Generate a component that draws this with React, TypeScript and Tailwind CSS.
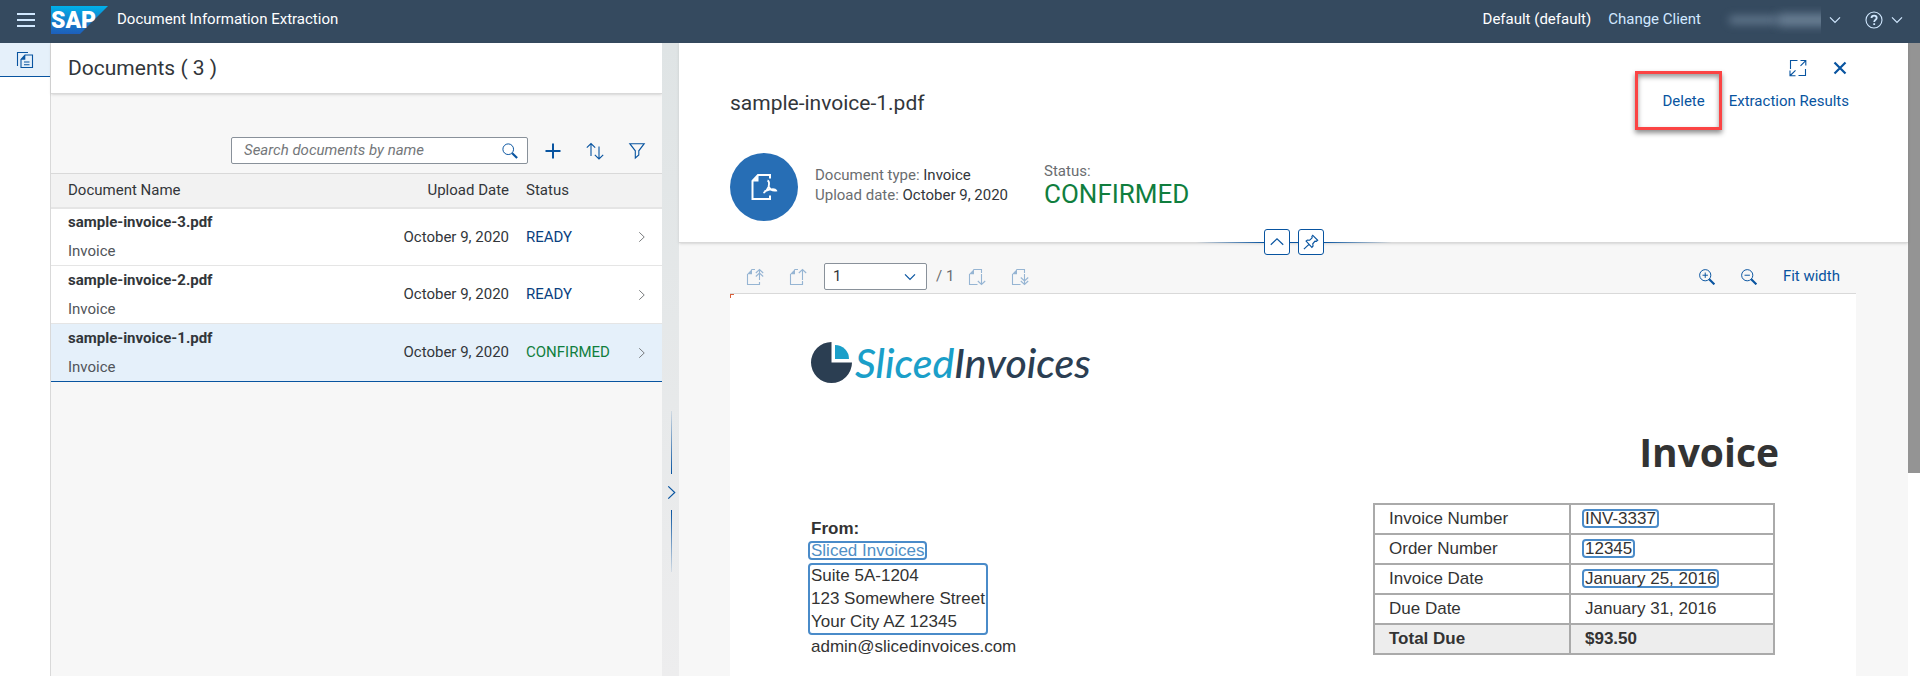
import React from 'react';

type IconProps = { className?: string; children: React.ReactNode; size?: number; stroke?: number };

function Icon({ className = '', children, size = 18, stroke = 1.1 }: IconProps) {
  return (
    <svg
      width={size}
      height={size}
      viewBox="0 0 18 18"
      fill="none"
      stroke="currentColor"
      strokeWidth={stroke}
      className={`shrink-0 ${className}`}
      aria-hidden="true"
    >
      {children}
    </svg>
  );
}

const ChevronDown = ({ className = '' }: { className?: string }) => (
  <Icon size={12} className={className} stroke={1.8}>
    <path d="M1.5 5 L9 12.5 L16.5 5" />
  </Icon>
);

const PageOutline = () => (
  <>
    <path d="M5.5 1.5 H9 M1.5 6 V16.5 H13.5 V14" />
    <path d="M1 6.2 L6 1 V6.2 Z" fill="currentColor" stroke="none" />
  </>
);

function SapLogo() {
  return (
    <svg width="57" height="28" viewBox="0 0 57 28" role="img" aria-label="SAP" className="shrink-0">
      <defs>
        <linearGradient id="sap" x1="0" y1="0" x2="0" y2="1">
          <stop offset="0" stopColor="#00b1eb" />
          <stop offset="0.5" stopColor="#1481cd" />
          <stop offset="1" stopColor="#1e5fbb" />
        </linearGradient>
      </defs>
      <path d="M0 0 H57 L29 28 H0 Z" fill="url(#sap)" />
      <text x="0" y="22" fontSize="23" fontWeight="900" fontFamily="Roboto, sans-serif" fill="#fff">
        SAP
      </text>
    </svg>
  );
}

function Header() {
  return (
    <header className="flex h-[43px] shrink-0 items-center bg-[#354a5f] pr-[17px] pb-1 text-[15px] text-white">
      <button aria-label="Toggle navigation" className="flex w-[51px] items-center justify-center text-[#d1e8ff]">
        <Icon stroke={1.8}>
          <path d="M0 3 H18 M0 9 H18 M0 15 H18" />
        </Icon>
      </button>
      <SapLogo />
      <h1 className="ml-[9px]">Document Information Extraction</h1>
      <div className="ml-auto flex items-center">
        <span>Default (default)</span>
        <a href="#client" className="ml-[17px] text-[#d1e8ff]">
          Change Client
        </a>
        <button aria-label="User menu" className="ml-4 flex items-center text-[#d1e8ff]">
          <span className="flex h-7 w-[104px] items-center overflow-hidden pl-3">
            <span className="h-2 w-12 shrink-0 rounded bg-[#8fa5bb]/50 blur-[4px]" />
            <span className="h-3 w-16 shrink-0 rounded bg-[#8fa5bb]/60 blur-[5px]" />
          </span>
          <ChevronDown className="ml-2" />
        </button>
        <button aria-label="Help" className="ml-6 flex items-center gap-2 text-[#d1e8ff]">
          <Icon>
            <circle cx="9" cy="9" r="8" />
            <path d="M6.5 7 C6.5 3.8 11.7 3.8 11.7 7 C11.7 8.8 9.2 8.8 9.2 11 M9.2 12.2 V14" strokeWidth="1.8" />
          </Icon>
          <ChevronDown />
        </button>
      </div>
    </header>
  );
}

const documents = [
  { name: 'sample-invoice-3.pdf', type: 'Invoice', date: 'October 9, 2020', status: 'READY' },
  { name: 'sample-invoice-2.pdf', type: 'Invoice', date: 'October 9, 2020', status: 'READY' },
  { name: 'sample-invoice-1.pdf', type: 'Invoice', date: 'October 9, 2020', status: 'CONFIRMED' },
];

function DocumentList() {
  return (
    <section className="min-w-0 bg-[#f7f7f7]">
      <div className="flex h-[51px] items-center border-b border-[#d9d9d9] bg-white px-[17px] pt-0.5 shadow-sm">
        <h2 className="text-[21px]">Documents ( 3 )</h2>
      </div>
      <div className="flex h-[79px] items-end justify-end px-4 pb-[9px] text-[#0854a0]">
        <label className="flex h-[27px] w-[297px] items-center rounded-[2px] border border-[#89919a] bg-white pr-[9px] pl-3">
          <input
            type="text"
            aria-label="Search documents by name"
            placeholder="Search documents by name"
            className="min-w-0 flex-1 bg-transparent text-[15px] text-[#32363a] outline-none placeholder:text-[#74777a] placeholder:italic"
          />
          <button aria-label="Search">
            <Icon size={16}>
              <circle cx="7" cy="7" r="6" />
              <path d="M11.5 11.5 L17 17" strokeWidth="2.4" />
            </Icon>
          </button>
        </label>
        <div className="flex h-[27px] items-center gap-6 pl-4">
          <button aria-label="Add">
            <Icon stroke={2}>
              <path d="M9 1.5 V16.5 M1.5 9 H16.5" />
            </Icon>
          </button>
          <button aria-label="Sort">
            <Icon>
              <path d="M5 14 V1.5 M.8 5.7 L5 1.5 L9.2 5.7 M13 4.5 V17 M8.8 12.8 L13 17 L17.2 12.8" />
            </Icon>
          </button>
          <button aria-label="Filter">
            <Icon>
              <path d="M1.8 1.7 H16.2 L10.8 8.8 V13 L7.3 16 V8.8 Z" />
            </Icon>
          </button>
        </div>
      </div>
      <table className="w-full table-fixed border-collapse text-[15px]">
        <colgroup>
          <col />
          <col className="w-[200px]" />
          <col className="w-[103px]" />
          <col className="w-[41px]" />
        </colgroup>
        <thead>
          <tr className="h-[34px] border-t border-b-2 border-t-[#d9d9d9] border-b-[#e5e5e5] bg-[#f2f2f2] text-left">
            <th className="pl-[17px] font-normal">Document Name</th>
            <th className="pr-[9px] text-right font-normal">Upload Date</th>
            <th className="pl-2 font-normal">Status</th>
            <td />
          </tr>
        </thead>
        <tbody>
          {documents.map((d) => {
            const confirmed = d.status === 'CONFIRMED';
            return (
              <tr
                key={d.name}
                className={`h-[58px] border-b ${
                  confirmed ? 'border-[#0854a0] bg-[#e5f0fa]' : 'border-[#e5e5e5] bg-white'
                }`}
              >
                <td className="pl-[17px]">
                  <div className="leading-[20px] font-bold">{d.name}</div>
                  <div className="mt-[9px] leading-[20px] text-[#51555a]">{d.type}</div>
                </td>
                <td className="pr-[9px] text-right">{d.date}</td>
                <td className={`pl-2 ${confirmed ? 'text-[#107e3e]' : 'text-[#0a3f7f]'}`}>{d.status}</td>
                <td>
                  <Icon size={10} className="mx-auto text-[#6a6d70]" stroke={1.6}>
                    <path d="M4 0.5 L13 9 L4 17.5" />
                  </Icon>
                </td>
              </tr>
            );
          })}
        </tbody>
      </table>
    </section>
  );
}

function Splitter() {
  return (
    <div className="flex flex-col items-center bg-gradient-to-b from-[#dfe4e5] to-[#ededee] pt-[368px] pl-0.5">
      <div className="h-[63px] w-px bg-gradient-to-b from-[#0854a0]/10 to-[#0854a0]" />
      <button aria-label="Expand list" className="flex h-[36px] items-center text-[#0854a0]">
        <Icon size={13} stroke={1.6}>
          <path d="M4.5 0.5 L13.5 9 L4.5 17.5" />
        </Icon>
      </button>
      <div className="h-[62px] w-px bg-gradient-to-b from-[#0854a0] to-[#0854a0]/10" />
    </div>
  );
}

function DetailHeader() {
  return (
    <div className="relative h-[200px] shrink-0 border-b border-[#d9d9d9] bg-white pt-4 pr-[59px] pl-[51px] shadow-sm">
      <div className="flex justify-end gap-6 text-[#0854a0]">
        <button aria-label="Full screen">
          <Icon>
            <path d="M1.5 10 V1.5 H8.5 M9.5 16.5 H16.5 V10 M11.5 1.5 H16.8 V6.5 M16.5 1.8 L11.5 6.8 M1 11.5 V16.8 H6.5 M1.3 16.5 L6.5 11.3" />
          </Icon>
        </button>
        <button aria-label="Close">
          <Icon stroke={2.2}>
            <path d="M3.5 3.5 L14.5 14.5 M14.5 3.5 L3.5 14.5" />
          </Icon>
        </button>
      </div>
      <div className="mt-3 flex h-7 items-start">
        <h2 className="text-[21px] leading-7">sample-invoice-1.pdf</h2>
        <div className="relative ml-auto flex items-center gap-6 text-[15px] leading-6 text-[#0854a0]">
          <button>Delete</button>
          <button>Extraction Results</button>
          <div className="pointer-events-none absolute -top-[18px] -left-[27px] h-[59px] w-[87px] border-3 border-[#fb4444] shadow-[0_3px_5px_rgba(0,0,0,0.45),inset_0_3px_5px_rgba(0,0,0,0.4)]" />
        </div>
      </div>
      <div className="mt-9 flex h-[68px] text-[15px]">
        <div className="flex size-[68px] items-center justify-center rounded-full bg-[#276eb5] text-white">
          <svg width="28" height="28" viewBox="0 0 28 28" fill="none" stroke="currentColor" strokeWidth="2" aria-hidden="true">
            <path d="M20 5.5 V2 H8 L2.5 8 V26 H20 V22.5" />
            <path d="M3 8.5 L8.5 2.5 V8.5 Z" fill="currentColor" stroke="none" />
            <path d="M17.5 7.5 C20 8.5 19 12 18.5 14 C17.5 16.5 16 18.5 13.5 20 M18.5 13.5 C20 16.5 22.5 18 26 17.5 C25 15.5 20.5 16 14.5 18.3" strokeWidth="1.9" />
          </svg>
        </div>
        <div className="ml-[17px] pt-[12px] leading-[20px] text-[#6a6d70]">
          <p>
            Document type: <span className="text-[#32363a]">Invoice</span>
          </p>
          <p>
            Upload date: <span className="text-[#32363a]">October 9, 2020</span>
          </p>
        </div>
        <div className="ml-9 pt-2 text-[#6a6d70]">
          <p className="leading-[20px]">Status:</p>
          <p className="text-[26px] leading-[26px] text-[#107e3e]">CONFIRMED</p>
        </div>
      </div>
      <div className="absolute inset-x-0 -bottom-[13px] flex items-center justify-center">
        <span className="h-px w-[68px] bg-gradient-to-r from-transparent to-[#0854a0]" />
        <button aria-label="Collapse header" className="flex size-[26px] items-center justify-center rounded-[3px] border border-[#0854a0] bg-white text-[#0854a0]">
          <Icon size={14} stroke={1.5}>
            <path d="M1 12.5 L9 5 L17 12.5" />
          </Icon>
        </button>
        <span className="h-px w-2 bg-[#0854a0]" />
        <button aria-label="Pin header" className="flex size-[26px] items-center justify-center rounded-[3px] border border-[#0854a0] bg-white text-[#0854a0]">
          <Icon size={16} stroke={1.3}>
            <path d="M11 1.5 L16.5 7 L15 8.2 L13.5 8 L11 11 L11.3 13.5 L10 15 L3.5 8 L5 6.8 L7.5 7 L10.3 4.3 L10 2.7 Z M7 11.3 L1 17" />
          </Icon>
        </button>
        <span className="h-px w-[68px] bg-gradient-to-l from-transparent to-[#0854a0]" />
      </div>
    </div>
  );
}

function ViewerToolbar() {
  return (
    <div className="mt-5 flex h-[27px] shrink-0 items-center px-4 text-[15px] text-[#0854a0]">
      <button aria-label="First page" className="opacity-40">
        <Icon>
          <PageOutline />
          <path d="M13.5 12 V1.5 M9.8 5 L13.5 1.5 L17.2 5 M9.8 8.5 L13.5 5 L17.2 8.5 M13.5 14 V16.5" />
        </Icon>
      </button>
      <button aria-label="Previous page" className="ml-[25px] opacity-40">
        <Icon>
          <PageOutline />
          <path d="M13.5 12 V1.5 M9.8 5 L13.5 1.5 L17.2 5 M13.5 13 V16.5" />
        </Icon>
      </button>
      <div className="relative ml-[17px]">
        <select
          aria-label="Page"
          className="block h-[27px] w-[103px] appearance-none rounded-[2px] border border-[#89919a] bg-white pl-2 text-[15px] text-[#32363a]"
        >
          <option>1</option>
        </select>
        <ChevronDown className="pointer-events-none absolute top-2 right-[11px]" />
      </div>
      <span className="ml-[9px] w-4 whitespace-nowrap text-[#6a6d70]">/ 1</span>
      <button aria-label="Next page" className="ml-4 opacity-40">
        <Icon>
          <path d="M5.5 1.5 H13.5 V5 M1.5 6 V16.5 H9.5 M13.5 6 V16.5 M9.8 13 L13.5 16.5 L17.2 13" />
          <path d="M1 6.2 L6 1 V6.2 Z" fill="currentColor" stroke="none" />
        </Icon>
      </button>
      <button aria-label="Last page" className="ml-[25px] opacity-40">
        <Icon>
          <path d="M5.5 1.5 H13.5 V5 M1.5 6 V16.5 H9.5 M13.5 6 V16.5 M9.8 13 L13.5 16.5 L17.2 13 M9.8 9.5 L13.5 13 L17.2 9.5" />
          <path d="M1 6.2 L6 1 V6.2 Z" fill="currentColor" stroke="none" />
        </Icon>
      </button>
      <button aria-label="Zoom in" className="ml-auto">
        <Icon size={16}>
          <circle cx="7" cy="7" r="6.3" />
          <path d="M7 4 V10 M4 7 H10" />
          <path d="M11.5 11.5 L17.3 17.3" strokeWidth="2.4" />
        </Icon>
      </button>
      <button aria-label="Zoom out" className="ml-[26px]">
        <Icon size={16}>
          <circle cx="7" cy="7" r="6.3" />
          <path d="M4 7 H10" />
          <path d="M11.5 11.5 L17.3 17.3" strokeWidth="2.4" />
        </Icon>
      </button>
      <button className="ml-[26px]">Fit width</button>
    </div>
  );
}

const invoiceRows = [
  { label: 'Invoice Number', value: 'INV-3337', marked: true },
  { label: 'Order Number', value: '12345', marked: true },
  { label: 'Invoice Date', value: 'January 25, 2016', marked: true },
  { label: 'Due Date', value: 'January 31, 2016', marked: false },
  { label: 'Total Due', value: '$93.50', marked: false },
];

function InvoicePage() {
  return (
    <article className="relative mt-[3px] flex-1 border-t border-[#d9d9d9] bg-white px-[81px] pt-12 font-['Liberation_Sans',Arial,sans-serif] text-[17px] text-[#333]">
      <span className="absolute top-0 left-0 size-1 border-t border-l border-[#d9603b]" />
      <div className="flex h-[41px] items-center">
        <svg width="42" height="42" viewBox="0 0 42 42" aria-hidden="true" className="shrink-0">
          <path d="M20.5 0 V20.5 H41 A20.5 20.5 0 1 1 20.5 0 Z" fill="#2b3e52" />
          <path d="M24 3 A14 14 0 0 1 38 17 H24 Z" fill="#1b9fc9" />
        </svg>
        <span className="ml-0.5 font-['Lato',sans-serif] text-[41px] leading-[41px] font-medium italic">
          <span className="text-[#1b9fc9]">Sliced</span>
          <span className="text-[#2b3e52]">Invoices</span>
        </span>
      </div>
      <h2 className="-mr-1 mt-[49px] text-right font-['Open_Sans',sans-serif] text-[39px] leading-10 font-bold">Invoice</h2>
      <div className="mt-[31px] flex items-start justify-between">
        <address className="mt-[14px] leading-6 not-italic">
          <div className="font-bold">From:</div>
          <div className="flex h-[22px] items-start">
            <a href="#sender" className="-mx-[3px] rounded-[4px] border-2 border-[#4a8bc9] px-px leading-[15px] text-[#4f8fc6]">
              Sliced Invoices
            </a>
          </div>
          <div className="-mx-[3px] w-fit rounded-[4px] border-2 border-[#4a8bc9] px-px">
            <div className="leading-[22px]">Suite 5A-1204</div>
            <div className="leading-6">123 Somewhere Street</div>
            <div className="leading-[22px]">Your City AZ 12345</div>
          </div>
          <div>admin@slicedinvoices.com</div>
        </address>
        <table className="w-[402px] table-fixed border-collapse">
          <colgroup>
            <col className="w-[196px]" />
            <col />
          </colgroup>
          <tbody>
            {invoiceRows.map((r) => {
              const total = r.label === 'Total Due';
              return (
                <tr key={r.label} className={`h-[30px] ${total ? 'bg-[#ededed] font-bold' : ''}`}>
                  <td className="border-2 border-[#aaa] pl-[14px] leading-6">{r.label}</td>
                  <td className="border-2 border-[#aaa] pl-[14px] leading-6">
                    {r.marked ? (
                      <span className="-mx-[3px] inline-block rounded-[4px] border-2 border-[#4a8bc9] px-px leading-[15px]">{r.value}</span>
                    ) : (
                      r.value
                    )}
                  </td>
                </tr>
              );
            })}
          </tbody>
        </table>
      </div>
    </article>
  );
}

export default function App() {
  return (
    <div className="flex h-screen flex-col overflow-hidden bg-white font-['Roboto',sans-serif] text-[#32363a]">
      <Header />
      <div className="flex min-h-0 flex-1">
        <nav className="w-[51px] shrink-0 border-r border-[#d9d9d9]">
          <a
            href="#documents"
            aria-label="Documents"
            className="flex h-[34px] items-center justify-center border-b border-[#0854a0] bg-[#e5f0fa] text-[#0854a0]"
          >
            <Icon>
              <path d="M1.5 15 V1.5 H12 M6 16.5 H16.5 V4 H9 L5 8.5 V16.5 H8" />
              <path d="M4.7 8.7 L9.3 3.7 V8.7 Z" fill="currentColor" stroke="none" />
              <path d="M8 11 H13.5 M8 13.7 H13.5" />
            </Icon>
          </a>
        </nav>
        <main className="grid min-w-0 flex-1 grid-cols-[611fr_17px_1229fr]">
          <DocumentList />
          <Splitter />
          <section className="flex min-h-0 min-w-0 flex-col bg-[#f7f7f7]">
            <DetailHeader />
            <div className="flex min-h-0 flex-1 flex-col overflow-hidden pr-[52px] pl-[51px]">
              <ViewerToolbar />
              <InvoicePage />
            </div>
          </section>
        </main>
        <div className="w-3 shrink-0" aria-hidden="true">
          <div className="h-[68%] bg-[#949494]" />
        </div>
      </div>
    </div>
  );
}
